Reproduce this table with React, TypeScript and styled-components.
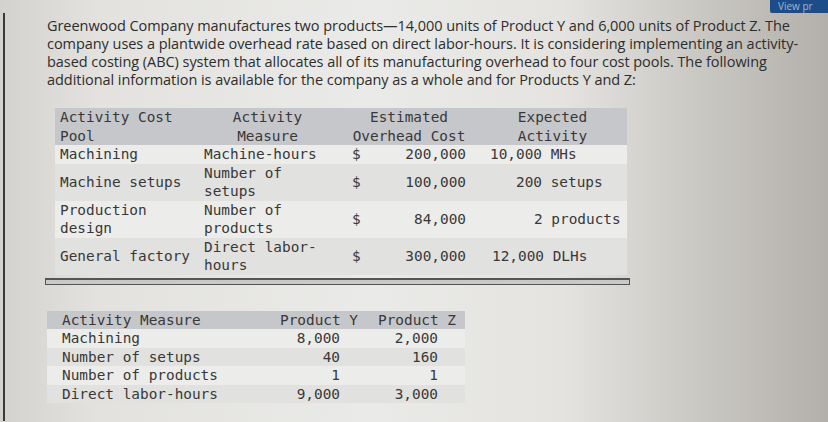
import React from "react";
import styled, { createGlobalStyle } from "styled-components";

const GlobalStyle = createGlobalStyle`
  html, body {
    margin: 0;
    padding: 0;
  }
  body {
    width: 828px;
    height: 422px;
    overflow: hidden;
    background: linear-gradient(
      90deg,
      #d4d2ce 0%,
      #e3e2df 12%,
      #eaeae8 45%,
      #e4e3e0 68%,
      #c9c7c2 85%,
      #b3b0ab 100%
    );
  }
`;

const TopBar = styled.div`
  height: 13px;
  display: flex;
  justify-content: flex-end;
`;

const ViewButton = styled.div`
  width: 50px;
  height: 13px;
  background-color: #1d4d88;
  color: #9fb6d4;
  font-family: "Open Sans", sans-serif;
  font-size: 10px;
  line-height: 12px;
  padding-left: 8px;
  white-space: nowrap;
  border-bottom-left-radius: 2px;
`;

const Sheet = styled.div`
  margin: 0 0 0 3px;
  padding: 4px 0 0 42px;
  border-left: 2px solid #3a3a3a;
  min-height: 404px;
`;

const Intro = styled.p`
  margin: 0;
  font-family: "Open Sans", sans-serif;
  font-size: 14.5px;
  line-height: 18px;
  letter-spacing: -0.05px;
  color: #2d2d2d;
`;

const Line = styled.span`
  display: block;
  white-space: nowrap;
`;

const CostTable = styled.div`
  margin: 19px 0 0 8px;
  width: 572px;
  display: grid;
  grid-template-columns: 140px 145px 138px 149px;
  font-family: "DejaVu Sans Mono", monospace;
  font-size: 14.4px;
  line-height: 18.5px;
  color: #383838;
`;

const Cell = styled.div<{ shade: string; align?: string; pad?: string }>`
  background-color: ${({ shade }) => shade};
  display: flex;
  align-items: center;
  justify-content: ${({ align }) => align || "flex-start"};
  text-align: ${({ align }) => (align === "center" ? "center" : "left")};
  padding: ${({ pad }) => pad || "0 0 0 5px"};
  white-space: pre;
`;

const Money = styled.div`
  display: flex;
  justify-content: space-between;
  width: 100%;
  padding: 0 12px 0 12px;
`;

const Divider = styled.div`
  margin: 3px 0 0 -2px;
  width: 583px;
  height: 4px;
  border: 1px solid #555;
  border-top-width: 2px;
  background-color: #c9c9c9;
`;

const ProductTable = styled.div`
  margin: 26px 0 0 0;
  width: 418px;
  display: grid;
  grid-template-columns: 218px 100px 100px;
  font-family: "DejaVu Sans Mono", monospace;
  font-size: 14.4px;
  line-height: 18.6px;
  color: #383838;
`;

const PCell = styled.div<{ shade: string; right?: number }>`
  background-color: ${({ shade }) => shade};
  text-align: ${({ right }) => (right === undefined ? "left" : "right")};
  padding: ${({ right }) => (right === undefined ? "0 0 0 15px" : `0 ${right}px 0 0`)};
  white-space: pre;
`;

const HEAD = "#c6c7cb";
const LIGHT = "#ececeb";
const DARK = "#e1e1e0";

type PoolRow = {
  pool: string;
  measure: string;
  cost: string;
  activity: string;
  pad: string;
  shade: string;
};

const pools: PoolRow[] = [
  { pool: "Machining", measure: "Machine-hours", cost: "200,000", activity: "10,000 MHs", pad: "0 0 0 12px", shade: LIGHT },
  { pool: "Machine setups", measure: "Number of\nsetups", cost: "100,000", activity: "200 setups", pad: "0 0 0 38px", shade: DARK },
  { pool: "Production\ndesign", measure: "Number of\nproducts", cost: "84,000", activity: "2 products", pad: "0 0 0 56px", shade: LIGHT },
  { pool: "General factory", measure: "Direct labor-\nhours", cost: "300,000", activity: "12,000 DLHs", pad: "0 0 0 14px", shade: DARK },
];

const products = [
  { name: "Machining", y: "8,000", z: "2,000", shade: LIGHT },
  { name: "Number of setups", y: "40", z: "160", shade: DARK },
  { name: "Number of products", y: "1", z: "1", shade: LIGHT },
  { name: "Direct labor-hours", y: "9,000", z: "3,000", shade: DARK },
];

const App = (): JSX.Element => {
  return (
    <>
      <GlobalStyle />
      <TopBar>
        <ViewButton>View pr</ViewButton>
      </TopBar>
      <Sheet>
        <Intro>
          <Line>
            Greenwood Company manufactures two products—14,000 units of Product Y and 6,000 units of Product Z. The
          </Line>
          <Line>
            company uses a plantwide overhead rate based on direct labor-hours. It is considering implementing an activity-
          </Line>
          <Line>
            based costing (ABC) system that allocates all of its manufacturing overhead to four cost pools. The following
          </Line>
          <Line>additional information is available for the company as a whole and for Products Y and Z:</Line>
        </Intro>

        <CostTable>
          <Cell shade={HEAD}>{"Activity Cost\nPool"}</Cell>
          <Cell shade={HEAD} align="center" pad="0">
            {"Activity\nMeasure"}
          </Cell>
          <Cell shade={HEAD} align="center" pad="0">
            {"Estimated\nOverhead Cost"}
          </Cell>
          <Cell shade={HEAD} align="center" pad="0">
            {"Expected\nActivity"}
          </Cell>
          {pools.map((row) => (
            <React.Fragment key={row.pool}>
              <Cell shade={row.shade}>{row.pool}</Cell>
              <Cell shade={row.shade} pad="0 0 0 9px">
                {row.measure}
              </Cell>
              <Cell shade={row.shade} pad="0">
                <Money>
                  <span>$</span>
                  <span>{row.cost}</span>
                </Money>
              </Cell>
              <Cell shade={row.shade} pad={row.pad}>
                {row.activity}
              </Cell>
            </React.Fragment>
          ))}
        </CostTable>
        <Divider />

        <ProductTable>
          <PCell shade={HEAD}>Activity Measure</PCell>
          <PCell shade={HEAD} right={7}>
            Product Y
          </PCell>
          <PCell shade={HEAD} right={9}>
            Product Z
          </PCell>
          {products.map((p) => (
            <React.Fragment key={p.name}>
              <PCell shade={p.shade}>{p.name}</PCell>
              <PCell shade={p.shade} right={25}>
                {p.y}
              </PCell>
              <PCell shade={p.shade} right={27}>
                {p.z}
              </PCell>
            </React.Fragment>
          ))}
        </ProductTable>
      </Sheet>
    </>
  );
};

export default App;
